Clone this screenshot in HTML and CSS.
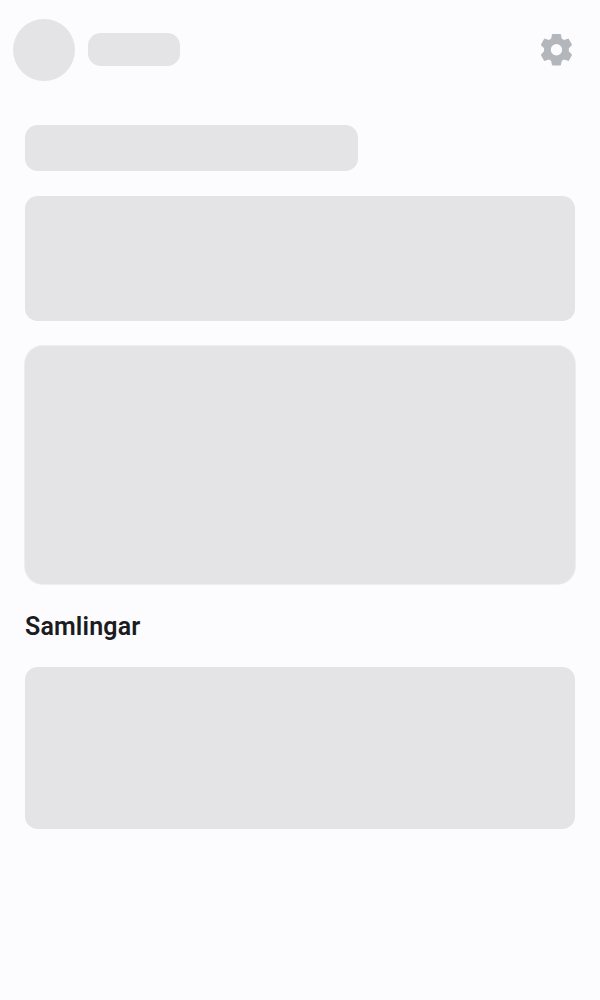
FILE: index.html
```html
<!DOCTYPE html>
<html lang="sv">
<head>
<meta charset="utf-8">
<title>Samlingar</title>
<link rel="stylesheet" href="styles.css">
</head>
<body>
<header class="topbar">
  <div class="skeleton avatar"></div>
  <div class="skeleton name"></div>
  <button class="settings" aria-label="Inställningar">
    <svg class="gear" viewBox="0 0 24 24"><path fill-rule="evenodd" d="M9.5 1.9h4.6q.5 0 .6.5l.5 2.6q.7.3 1.4.8l2.5-.9q.5-.2.7.3l1.8 3.2q.3.5-.1.8l-1.8 1.8q.1 1 0 2l1.8 1.8q.4.3.1.8l-1.8 3.2q-.2.5-.7.3l-2.5-.9q-.7.5-1.4.8l-.5 2.6q-.1.5-.6.5H9.5q-.5 0-.6-.5l-.5-2.6q-.7-.3-1.4-.8l-2.5.9q-.5.2-.7-.3L2 15.600q-.3-.5.1-.8L3.900 13q-.1-1 0-2L2.100 9.200q-.4-.3-.1-.8l1.800-3.200q.2-.5.7-.3l2.500.9q.7-.5 1.400-.8l.5-2.600q.1-.5.6-.5zM11.8 8.35a3.65 3.65 0 1 0 0 7.3 3.65 3.65 0 0 0 0-7.3z"/></svg>
  </button>
</header>
<main class="content">
  <div class="skeleton title"></div>
  <div class="skeleton banner"></div>
  <div class="skeleton card"></div>
  <h2 class="heading">Samlingar</h2>
  <div class="skeleton collection"></div>
</main>
</body>
</html>
```
FILE: styles.css
```css
body { margin: 0; background: #fcfcfe; color: #1b1c1f; font-family: Roboto, sans-serif; }
.topbar { display: flex; align-items: center; height: 100px; box-sizing: border-box; padding: 0 25px 0 12.5px; }
.skeleton { background: #e4e4e6; border-radius: 12.5px; }
.avatar { width: 62.5px; height: 62.5px; border-radius: 50%; margin-right: 12.5px; }
.name { width: 92.5px; height: 33.4px; margin-bottom: .6px; }
.settings { margin-left: auto; padding: 0; border: 0; background: none; display: flex; }
.gear { width: 37.5px; height: 37.5px; fill: #b3b6ba; }
.content { padding: 25px; }
.title { width: 333px; height: 46px; margin-bottom: 25px; }
.banner { height: 125px; margin-bottom: 25px; }
.card { height: 238px; border-radius: 18px; box-shadow: 0 0 0 1px #eeeef0; }
.heading { margin: 27px 0 24px; font-size: 25px; line-height: 32px; font-weight: 600; letter-spacing: .15px; }
.collection { height: 162px; }
```
